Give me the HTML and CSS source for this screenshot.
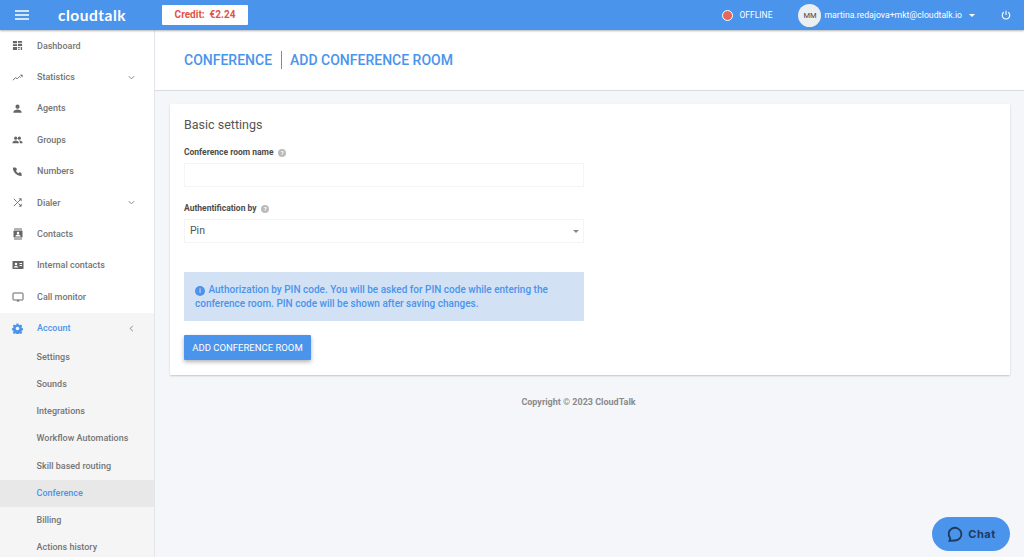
FILE: index.html
```html
<!DOCTYPE html>
<html lang="en">
<head>
  <meta charset="UTF-8" />
  <title>Add conference room - CloudTalk</title>
  <link rel="stylesheet" href="styles.css">
</head>
<body>

  <header class="topbar">
    <div class="topbar-left">
      <svg class="burger" viewBox="0 0 14 10" width="14" height="10"><path d="M0 1h14M0 5h14M0 9h14" stroke="#fff" stroke-width="1.3"/></svg>
      <span class="logo">cloudtalk</span>
      <span class="credit">Credit:&nbsp; €2.24</span>
    </div>
    <div class="topbar-right">
      <span class="status"><i class="status-dot"></i>OFFLINE</span>
      <span class="user">
        <span class="avatar">MM</span>
        <span>martina.redajova+mkt@cloudtalk.io</span>
        <i class="caret"></i>
      </span>
      <svg class="power" viewBox="0 0 24 24" width="10" height="10"><path d="M12 2v10M6.5 5.5a9 9 0 1 0 11 0" fill="none" stroke="#fff" stroke-width="2.6"/></svg>
    </div>
  </header>

  <div class="main">
    <nav class="sidebar">
      <a class="nav-item"><svg viewBox="0 0 24 24"><path d="M2 2h9v5H2zM2 9h9v4H2zM13 2h9v4h-9zM13 8h9v5h-9zM2 15h9v7H2zM13 15h4v3h-4zM19 15h3v7h-3zM13 20h4v2h-4z"/></svg>Dashboard</a>
      <a class="nav-item"><svg viewBox="0 0 24 24"><path d="M2 18l6-6 3 3 5-5 3 2" fill="none" stroke="#666" stroke-width="2"/><path d="M17 6h6v6z"/></svg>Statistics<svg class="chev" viewBox="0 0 10 10"><path d="M2 3.500l3 3 3-3" fill="none" stroke="#888" stroke-width="1.100"/></svg></a>
      <a class="nav-item"><svg viewBox="0 0 24 24"><circle cx="12" cy="8" r="4.500"/><path d="M3 20c0-4 5-6 9-6s9 2 9 6v1H3z"/></svg>Agents</a>
      <a class="nav-item"><svg viewBox="0 0 24 24"><circle cx="8" cy="9" r="3.500"/><circle cx="16" cy="9" r="3.500"/><path d="M1 19c0-3 4-5 7-5s7 2 7 5v1H1zM16.500 14c3 0 6.500 2 6.500 5v1h-6v-2c0-1.500-.500-3-1.500-4z"/></svg>Groups</a>
      <a class="nav-item"><svg viewBox="0 0 24 24"><path d="M6.600 3.500l3 .700 1 4.500-2 1.800a13 13 0 0 0 5.400 5.400l1.800-2 4.500 1 .700 3V21a1 1 0 0 1-1 1C10.500 22 2 13.500 2 4.500a1 1 0 0 1 1-1z"/></svg>Numbers</a>
      <a class="nav-item"><svg viewBox="0 0 24 24"><path d="M4 4l6 6M14 14l6 6M15 4h5v5M20 4L4 20M15 20h5v-5" fill="none" stroke="#666" stroke-width="2"/></svg>Dialer<svg class="chev" viewBox="0 0 10 10"><path d="M2 3.500l3 3 3-3" fill="none" stroke="#888" stroke-width="1.100"/></svg></a>
      <a class="nav-item"><svg class="icon-large" viewBox="0 0 24 24"><path d="M4 1h16v2H4zM4 21h16v2H4zM4 5h16a1 1 0 0 1 1 1v12a1 1 0 0 1-1 1H4a1 1 0 0 1-1-1V6a1 1 0 0 1 1-1z"/><circle cx="12" cy="10" r="2.500" fill="#fff"/><path d="M7 16c0-2 3-3 5-3s5 1 5 3v1H7z" fill="#fff"/></svg>Contacts</a>
      <a class="nav-item"><svg class="icon-large" viewBox="0 0 24 24"><path d="M2 4h20a1 1 0 0 1 1 1v14a1 1 0 0 1-1 1H2a1 1 0 0 1-1-1V5a1 1 0 0 1 1-1z"/><circle cx="8" cy="10" r="2.500" fill="#fff"/><path d="M3.500 17c0-2 3-3 4.500-3s4.500 1 4.500 3zM15 8h5v2h-5zM15 12h5v2h-5z" fill="#fff"/></svg>Internal contacts</a>
      <a class="nav-item"><svg class="icon-large" viewBox="0 0 24 24"><path d="M3 4h18a1 1 0 0 1 1 1v12a1 1 0 0 1-1 1H3a1 1 0 0 1-1-1V5a1 1 0 0 1 1-1z" fill="none" stroke="#666" stroke-width="2"/><path d="M9 21h6l-3-4z"/></svg>Call monitor</a>
      <div class="nav-group">
        <a class="nav-item nav-open"><svg viewBox="0 0 24 24"><path d="M12 8a4 4 0 1 0 0 8 4 4 0 0 0 0-8zM10 1h4l.600 3 2.300 1 2.600-1.700 2.800 2.800-1.700 2.600 1 2.300 3 .600v4l-3 .600-1 2.300 1.700 2.600-2.800 2.800-2.600-1.700-2.300 1-.600 3h-4l-.600-3-2.300-1-2.600 1.700-2.800-2.800 1.700-2.600-1-2.300-3-.600v-4l3-.600 1-2.300-1.700-2.600 2.800-2.800 2.600 1.700 2.300-1z" fill-rule="evenodd"/></svg>Account<svg class="chev" viewBox="0 0 10 10"><path d="M6.500 2l-3 3 3 3" fill="none" stroke="#888" stroke-width="1.100"/></svg></a>
        <a class="sub-item">Settings</a>
        <a class="sub-item">Sounds</a>
        <a class="sub-item">Integrations</a>
        <a class="sub-item">Workflow Automations</a>
        <a class="sub-item">Skill based routing</a>
        <a class="sub-item sub-active">Conference</a>
        <a class="sub-item">Billing</a>
        <a class="sub-item">Actions history</a>
      </div>
    </nav>

    <div class="content">
      <div class="page-title">
        <h1>CONFERENCE</h1>
        <h1 class="title-second">ADD CONFERENCE ROOM</h1>
      </div>

      <div class="card">
        <h2>Basic settings</h2>

        <label class="field-label">Conference room name <i class="help">?</i></label>
        <div class="input"></div>

        <label class="field-label label-auth">Authentification by <i class="help">?</i></label>
        <div class="input select">Pin<i class="select-caret"></i></div>

        <div class="notice">
          <i class="notice-icon">i</i> Authorization by PIN code. You will be asked for PIN code while entering the conference room. PIN code will be shown after saving changes.
        </div>

        <button class="btn-primary">ADD CONFERENCE ROOM</button>
      </div>

      <p class="copyright">Copyright © 2023 CloudTalk</p>
    </div>
  </div>

  <button class="chat">
    <svg viewBox="0 0 24 24" width="17" height="17"><path d="M5 21l1-3.500A9 9 0 1 1 12 20.500c-2 0-4 0-7 .500z" fill="none" stroke="#1f3a5c" stroke-width="2.600"/></svg>
    Chat
  </button>

</body>
</html>
```

FILE: styles.css
```css
html, body {
  margin: 0;
  height: 100%;
  overflow: hidden;
}
body {
  font-family: Roboto, "Liberation Sans", sans-serif;
  background: #f5f6f9;
  color: #555;
  display: flex;
  flex-direction: column;
}
.topbar {
  height: 30px;
  flex: none;
  background: #4a94ec;
  color: #fff;
  display: flex;
  justify-content: space-between;
  align-items: center;
  box-shadow: 0 1px 2px rgba(0, 0, 0, 0.3);
  position: relative;
  z-index: 2;
}
.topbar-left {
  display: flex;
  align-items: center;
}
.burger {
  margin-left: 15px;
}
.logo {
  font-family: Lato, sans-serif;
  font-weight: 700;
  font-size: 15.500px;
  letter-spacing: 0.5px;
  margin-left: 29px;
  width: 104px;
}
.credit {
  background: #fff;
  color: #e0534a;
  font-size: 10px;
  font-weight: 700;
  width: 86px;
  height: 20px;
  line-height: 20px;
  text-align: center;
  border-radius: 1px;
}
.topbar-right {
  display: flex;
  align-items: center;
  font-size: 8.500px;
}
.status {
  display: flex;
  align-items: center;
  width: 76px;
}
.status-dot {
  width: 11px;
  height: 11px;
  border-radius: 50%;
  background: #e2685c;
  border: 1px solid #fff;
  margin-right: 6px;
  box-sizing: border-box;
}
.user {
  display: flex;
  align-items: center;
  font-size: 8.700px;
}
.avatar {
  width: 23px;
  height: 23px;
  border-radius: 50%;
  background: #eceff1;
  color: #444;
  font-size: 7.500px;
  display: flex;
  align-items: center;
  justify-content: center;
  margin-right: 3px;
}
.caret {
  width: 0;
  height: 0;
  border: 3px solid transparent;
  border-top: 3px solid #fff;
  border-bottom: 0;
  margin-left: 7px;
}
.power {
  margin: 0 13px 0 26px;
}
.main {
  flex: 1;
  display: flex;
  min-height: 0;
}
.sidebar {
  width: 154px;
  flex: none;
  background: #fff;
  border-right: 1px solid #e3e5ea;
  font-size: 9px;
  font-weight: 500;
  color: #757575;
  overflow: hidden;
  display: flex;
  flex-direction: column;
}
.nav-item {
  display: flex;
  align-items: center;
  flex: none;
  height: 31.400px;
  position: relative;
}
.sidebar svg {
  width: 11px;
  height: 11px;
  margin: 0 14px 0 12px;
  fill: #666;
  flex: none;
}
.sidebar svg.icon-large {
  width: 12px;
  height: 12px;
  margin: 0 13.500px 0 11.500px;
}
.sidebar svg.chev {
  width: 9px;
  height: 9px;
  margin: 0;
  position: absolute;
  right: 18px;
}
.nav-group {
  background: #f5f5f5;
  flex: 1;
  min-height: 0;
  overflow: hidden;
}
.nav-open {
  color: #4a94ec;
}
.sidebar .nav-open svg:first-child {
  fill: #4a94ec;
}
.sub-item {
  display: block;
  height: 27.200px;
  line-height: 27.200px;
  padding-left: 36.500px;
}
.sub-active {
  background: #e8e8e8;
  color: #4a94ec;
}
.content {
  flex: 1;
  min-width: 0;
}
.page-title {
  height: 60px;
  background: #fff;
  border-bottom: 1px solid #d9dbdf;
  display: flex;
  align-items: center;
  padding-left: 29px;
}
.page-title h1 {
  margin: 0;
  font-size: 14px;
  font-weight: 500;
  color: #4a94ec;
}
.page-title .title-second {
  border-left: 1px solid #4a94ec;
  margin-left: 9px;
  padding-left: 8px;
  line-height: 18px;
}
.card {
  background: #fff;
  margin: 13px 14px 0 15px;
  height: 271px;
  padding: 14px;
  box-sizing: border-box;
  box-shadow: 0 1px 2px rgba(0, 0, 0, 0.2);
  border-radius: 1px;
}
.card h2 {
  margin: 0;
  font-size: 12.500px;
  font-weight: 400;
  line-height: 14px;
  color: #555;
}
.field-label {
  display: block;
  font-size: 8.500px;
  font-weight: 700;
  color: #4d4d4d;
  line-height: 10px;
  margin-top: 15px;
}
.label-auth {
  margin-top: 16px;
}
.help {
  display: inline-block;
  width: 8px;
  height: 8px;
  line-height: 8px;
  border-radius: 50%;
  background: #bbb;
  color: #fff;
  font-size: 6px;
  font-style: normal;
  text-align: center;
  margin-left: 2.500px;
}
.input {
  width: 400px;
  height: 24px;
  margin-top: 6px;
  border: 1px solid #f5f5f5;
  box-sizing: border-box;
  font-size: 10.500px;
  line-height: 22px;
  padding-left: 5px;
  color: #555;
  position: relative;
}
.select-caret {
  position: absolute;
  right: 4px;
  top: 10px;
  border: 3px solid transparent;
  border-top: 3px solid #888;
  border-bottom: 0;
}
.notice {
  width: 400px;
  height: 49px;
  margin-top: 29px;
  background: #d2e1f4;
  color: #4a94ec;
  font-size: 10px;
  font-weight: 500;
  line-height: 14px;
  padding: 11px 11px 10px;
  box-sizing: border-box;
  border-radius: 1px;
}
.notice-icon {
  display: inline-block;
  width: 10px;
  height: 10px;
  line-height: 10px;
  border-radius: 50%;
  background: #4a94ec;
  color: #d2e1f4;
  font-size: 7px;
  font-style: normal;
  text-align: center;
  margin-right: 1px;
}
.btn-primary {
  display: block;
  width: 127px;
  height: 25px;
  margin-top: 14px;
  background: #4a94ec;
  color: #fff;
  border: none;
  border-radius: 1px;
  font-family: inherit;
  font-size: 9.500px;
  padding: 0;
  box-shadow: 0 2px 4px rgba(0, 0, 0, 0.3);
}
.copyright {
  margin: 22px 22px 0 0;
  text-align: center;
  font-size: 9px;
  font-weight: 700;
  color: #8a8a8a;
}
.chat {
  position: fixed;
  left: 932px;
  top: 517px;
  width: 78px;
  height: 34px;
  border: none;
  border-radius: 17px;
  background: #4a94ec;
  color: #1f3a5c;
  font-family: Inter, sans-serif;
  font-weight: 700;
  font-size: 11px;
  letter-spacing: 0.5px;
  display: flex;
  align-items: center;
  justify-content: center;
  gap: 5px;
  padding: 0;
}
```
